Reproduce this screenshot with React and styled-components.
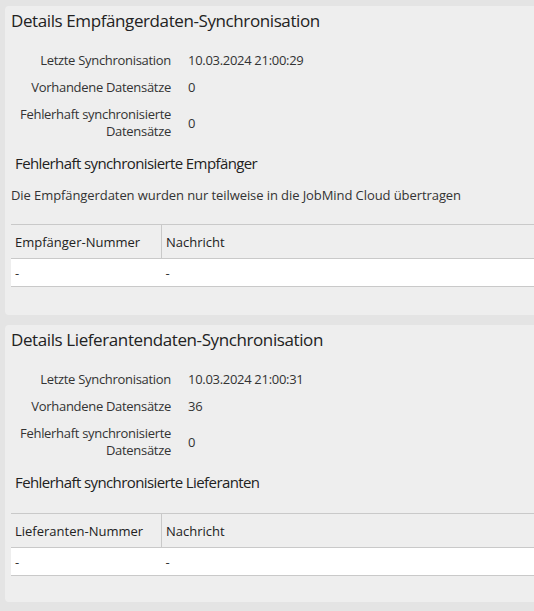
import styled, { createGlobalStyle } from "styled-components";

const GlobalStyle = createGlobalStyle`
  html, body {
    margin: 0;
    padding: 0;
    background: #e4e4e4;
    overflow: hidden;
  }
  body {
    font-family: "Open Sans", "Liberation Sans", sans-serif;
    color: #333;
  }
`;

const Page = styled.div`
  width: 640px;
  padding: 6px 0 0 5px;
  display: flex;
  flex-direction: column;
  gap: 10px;
`;

const Card = styled.section`
  background: #eeeeee;
  border-radius: 4px;
  padding: 4px 0 ${(p) => p.$bottom || 28}px 6px;
`;

const Title = styled.h2`
  margin: 0;
  font-size: 17px;
  line-height: 22px;
  letter-spacing: -0.4px;
  font-weight: 500;
  color: #222;
`;

const InfoGrid = styled.div`
  display: grid;
  grid-template-columns: 160px 1fr;
  column-gap: 17px;
  margin-top: 15px;
  font-size: 13px;
  line-height: 17px;
  letter-spacing: -0.3px;
`;

const Label = styled.div`
  text-align: right;
  padding: 5px 0;
  color: #333;
`;

const Value = styled.div`
  display: flex;
  align-items: center;
  padding: 5px 0;
  color: #333;
`;

const SubTitle = styled.h3`
  margin: 8px 0 0;
  padding-left: 4px;
  font-size: 15px;
  line-height: 20px;
  letter-spacing: -0.6px;
  font-weight: 400;
  color: #222;
`;

const Description = styled.p`
  margin: 13px 0 0;
  font-size: 13px;
  line-height: 18px;
  letter-spacing: -0.08px;
  color: #333;
`;

const Table = styled.table`
  width: 100%;
  margin-top: ${(p) => p.$top}px;
  border-collapse: collapse;
  font-size: 13px;
  line-height: 18px;
`;

const Th = styled.th`
  text-align: left;
  font-weight: 400;
  color: #222;
  height: 33px;
  padding: 0 0 0 4px;
  width: ${(p) => (p.$first ? "146px" : "auto")};
  border-top: 1px solid #c9c9c9;
  border-bottom: 1px solid #c9c9c9;
  border-left: ${(p) => (p.$first ? "none" : "1px solid #c9c9c9")};
`;

const Td = styled.td`
  background: #ffffff;
  height: 27px;
  padding: 0 0 0 4px;
  border-bottom: 1px solid #c9c9c9;
  color: #333;
`;

const SyncCard = ({ title, last, count, errors, subtitle, description, idLabel }) => (
  <Card $bottom={description ? 28 : 26}>
    <Title>{title}</Title>
    <InfoGrid>
      <Label>Letzte Synchronisation</Label>
      <Value>{last}</Value>
      <Label>Vorhandene Datensätze</Label>
      <Value>{count}</Value>
      <Label>Fehlerhaft synchronisierte Datensätze</Label>
      <Value>{errors}</Value>
    </InfoGrid>
    <SubTitle>{subtitle}</SubTitle>
    {description && <Description>{description}</Description>}
    <Table $top={description ? 20 : 21}>
      <thead>
        <tr>
          <Th $first>{idLabel}</Th>
          <Th>Nachricht</Th>
        </tr>
      </thead>
      <tbody>
        <tr>
          <Td>-</Td>
          <Td>-</Td>
        </tr>
      </tbody>
    </Table>
  </Card>
);

const App = () => (
  <>
    <GlobalStyle />
    <Page>
      <SyncCard
        title="Details Empfängerdaten-Synchronisation"
        last="10.03.2024 21:00:29"
        count="0"
        errors="0"
        subtitle="Fehlerhaft synchronisierte Empfänger"
        description="Die Empfängerdaten wurden nur teilweise in die JobMind Cloud übertragen"
        idLabel="Empfänger-Nummer"
      />
      <SyncCard
        title="Details Lieferantendaten-Synchronisation"
        last="10.03.2024 21:00:31"
        count="36"
        errors="0"
        subtitle="Fehlerhaft synchronisierte Lieferanten"
        idLabel="Lieferanten-Nummer"
      />
    </Page>
  </>
);

export default App;
